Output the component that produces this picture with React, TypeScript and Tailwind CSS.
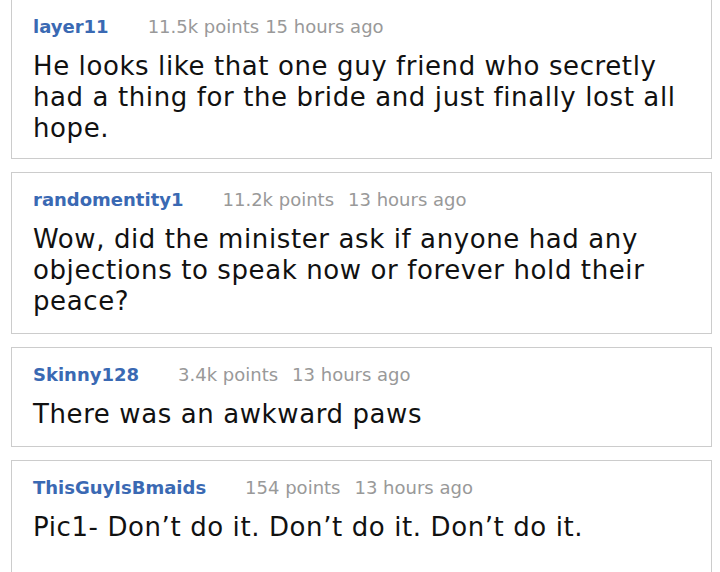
const comments = [
  {
    user: 'layer11',
    points: '11.5k points',
    time: '15 hours ago',
    gap: 'ml-[6px]',
    pad: 'pt-[18px] pb-[14px]',
    body: 'He looks like that one guy friend who secretly had a thing for the bride and just finally lost all hope.',
  },
  {
    user: 'randomentity1',
    points: '11.2k points',
    time: '13 hours ago',
    gap: 'ml-[14px]',
    pad: 'pt-[15px] pb-[16px]',
    body: 'Wow, did the minister ask if anyone had any objections to speak now or forever hold their peace?',
  },
  {
    user: 'Skinny128',
    points: '3.4k points',
    time: '13 hours ago',
    gap: 'ml-[14px]',
    pad: 'pt-[15px] pb-[16px]',
    body: 'There was an awkward paws',
  },
  {
    user: 'ThisGuyIsBmaids',
    points: '154 points',
    time: '13 hours ago',
    gap: 'ml-[14px]',
    pad: 'pt-[15px] pb-[48px]',
    body: 'Pic1- Don\u2019t do it. Don\u2019t do it. Don\u2019t do it.',
  },
];

export default function App() {
  return (
    <div
      className="w-[720px] h-[572px] overflow-hidden bg-white"
      style={{ fontFamily: '"DejaVu Sans", Verdana, sans-serif' }}
    >
      <div className="-mt-[4px] flex flex-col gap-[13px] pl-[11px] pr-[8px]">
        {comments.map((c) => (
          <div key={c.user} className={`border border-[#cccccc] bg-white pl-[21px] pr-4 ${c.pad}`}>
            <div className="flex items-baseline text-[18px] leading-[24px]">
              <span className="font-bold text-[#3a69b3]">{c.user}</span>
              <span className="ml-[39px] text-[#999999]">{c.points}</span>
              <span className={`${c.gap} text-[#999999]`}>{c.time}</span>
            </div>
            <p className="mt-[12px] text-[26px] leading-[31px] tracking-[0.6px] text-[#111111]">{c.body}</p>
          </div>
        ))}
      </div>
    </div>
  );
}
